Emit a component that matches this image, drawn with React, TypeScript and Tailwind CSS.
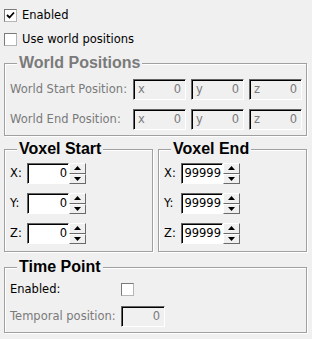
import React from 'react';

const CheckBox = ({ checked }: { checked?: boolean }) => (
  <span className="w-[13px] h-[13px] shrink-0 bg-white border border-t-[#7a7a7a] border-l-[#7a7a7a] border-b-[#b5b5b5] border-r-[#b5b5b5] flex items-center justify-center">
    {checked && (
      <svg width="9" height="9" viewBox="0 0 9 9">
        <path d="M1 4 L3.5 6.5 L8 1.5" fill="none" stroke="#000" strokeWidth="1.8" />
      </svg>
    )}
  </span>
);

const Spinner = () => (
  <div className="w-[17px] h-[21px] flex flex-col">
    {[0, 1].map((i) => (
      <div
        key={i}
        className="flex-1 flex items-center justify-center bg-[#f0f0f0] border border-t-white border-l-white border-b-[#696969] border-r-[#696969]"
      >
        <svg width="7" height="4" viewBox="0 0 7 4">
          {i === 0 ? <path d="M0 4 L3.5 0 L7 4 Z" fill="#000" /> : <path d="M0 0 L3.5 4 L7 0 Z" fill="#000" />}
        </svg>
      </div>
    ))}
  </div>
);

const Field = ({
  prefix,
  value,
  width,
  disabled,
  tight,
}: {
  prefix?: string;
  value: string;
  width: string;
  disabled?: boolean;
  tight?: boolean;
}) => (
  <div
    className={`${width} h-[21px] flex items-center justify-between ${tight ? 'pl-[2px] pr-[1px]' : 'px-[4px]'} border border-t-[#646464] border-l-[#646464] border-b-white border-r-white shadow-[inset_1px_1px_0_#000] ${
      disabled ? 'bg-[#f0f0f0] text-[#7a7a7a]' : 'bg-white text-black'
    }`}
  >
    <span>{prefix}</span>
    <span>{value}</span>
  </div>
);

const Group = ({ title, disabled, className, children }: { title: string; disabled?: boolean; className: string; children: React.ReactNode }) => (
  <fieldset className={`border border-[#a0a0a0] shadow-[inset_1px_1px_0_#fff,1px_1px_0_#fff] ${className}`}>
    <legend
      className={`ml-[7px] px-[2px] bg-[#f0f0f0] font-['Liberation_Sans',Arial,sans-serif] text-[16px] leading-[18px] font-bold ${
        disabled ? 'text-[#7a7a7a]' : 'text-black'
      }`}
    >
      {title}
    </legend>
    {children}
  </fieldset>
);

const VoxelRow = ({ axis, value }: { axis: string; value: string }) => (
  <div className="h-[21px] flex items-center">
    <span className="w-[17px]">{axis}</span>
    <Field value={value} width="w-[42px]" tight />
    <Spinner />
  </div>
);

export default function App() {
  return (
    <div className="w-[312px] h-[339px] bg-[#f0f0f0] text-[11.5px] text-black font-['DejaVu_Sans',Verdana,sans-serif] overflow-hidden">
      <div className="pt-[9px] pl-[4px] flex flex-col gap-[11px]">
        <label className="h-[13px] flex items-center gap-[5px]">
          <CheckBox checked />
          <span>Enabled</span>
        </label>
        <label className="h-[13px] flex items-center gap-[5px]">
          <CheckBox />
          <span>Use world positions</span>
        </label>
      </div>

      <Group title="World Positions" disabled className="mt-[8px] ml-[4px] w-[303px] pt-[7px] pb-[5px] pl-[5px]">
        <div className="flex flex-col gap-[9px] text-[#7a7a7a]">
          {['World Start Position:', 'World End Position:'].map((label) => (
            <div key={label} className="h-[21px] flex items-center">
              <span className="w-[123px]">{label}</span>
              <div className="flex gap-[5px]">
                <Field prefix="x" value="0" width="w-[53px]" disabled />
                <Field prefix="y" value="0" width="w-[53px]" disabled />
                <Field prefix="z" value="0" width="w-[53px]" disabled />
              </div>
            </div>
          ))}
        </div>
      </Group>

      <div className="mt-[4px] ml-[4px] flex gap-[5px]">
        <Group title="Voxel Start" className="w-[149px] pt-[5px] pb-[7px] pl-[5px]">
          <div className="flex flex-col gap-[9px]">
            <VoxelRow axis="X:" value="0" />
            <VoxelRow axis="Y:" value="0" />
            <VoxelRow axis="Z:" value="0" />
          </div>
        </Group>
        <Group title="Voxel End" className="w-[149px] pt-[5px] pb-[7px] pl-[5px]">
          <div className="flex flex-col gap-[9px]">
            <VoxelRow axis="X:" value="99999" />
            <VoxelRow axis="Y:" value="99999" />
            <VoxelRow axis="Z:" value="99999" />
          </div>
        </Group>
      </div>

      <Group title="Time Point" className="mt-[6px] ml-[4px] w-[303px] pt-[3px] pb-[5px] pl-[5px]">
        <div className="flex flex-col gap-[6px]">
          <div className="h-[21px] flex items-center">
            <span className="w-[111px]">Enabled:</span>
            <CheckBox />
          </div>
          <div className="h-[21px] flex items-center text-[#7a7a7a]">
            <span className="w-[111px]">Temporal position:</span>
            <Field value="0" width="w-[44px]" disabled />
          </div>
        </div>
      </Group>
    </div>
  );
}
